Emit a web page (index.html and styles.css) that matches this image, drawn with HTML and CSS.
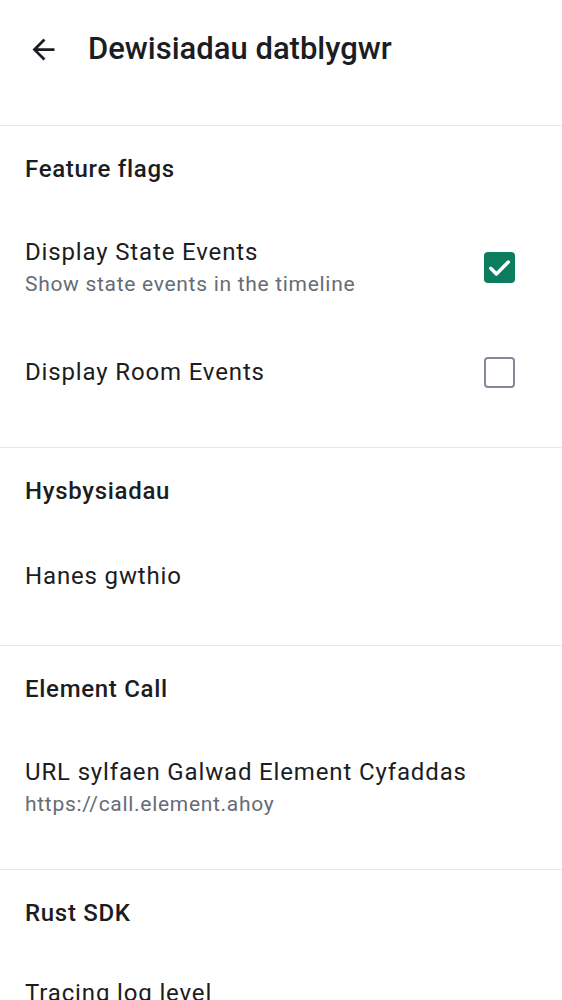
FILE: index.html
```html
<!DOCTYPE html>
<html lang="cy">
<head>
<meta charset="utf-8">
<title>Dewisiadau datblygwr</title>
<link rel="stylesheet" href="styles.css">
</head>
<body>
<header class="topbar">
  <button class="back" aria-label="Back">
    <svg viewBox="0 0 24 24" width="33" height="33"><path d="M20 11H7.83l5.59-5.59L12 4l-8 8 8 8 1.41-1.41L7.83 13H20v-2z" fill="#1b1d22"/></svg>
  </button>
  <h1 class="title">Dewisiadau datblygwr</h1>
</header>

<section class="section">
  <h2 class="section-title">Feature flags</h2>
  <div class="item item-two">
    <div class="texts">
      <div class="item-title">Display State Events</div>
      <div class="item-sub">Show state events in the timeline</div>
    </div>
    <span class="checkbox checked">
      <svg viewBox="0 0 24 24" width="31" height="31"><path d="M5.2 12.6l4.4 4.4L18.8 7.8" fill="none" stroke="#fff" stroke-width="2.7" stroke-linecap="round" stroke-linejoin="round"/></svg>
    </span>
  </div>
  <div class="item item-check">
    <div class="texts">
      <div class="item-title">Display Room Events</div>
    </div>
    <span class="checkbox"></span>
  </div>
</section>

<section class="section">
  <h2 class="section-title">Hysbysiadau</h2>
  <div class="item item-one">
    <div class="texts">
      <div class="item-title">Hanes gwthio</div>
    </div>
  </div>
</section>

<section class="section">
  <h2 class="section-title">Element Call</h2>
  <div class="item item-two">
    <div class="texts">
      <div class="item-title">URL sylfaen Galwad Element Cyfaddas</div>
      <div class="item-sub">https://call.element.ahoy</div>
    </div>
  </div>
</section>

<section class="section">
  <h2 class="section-title">Rust SDK</h2>
  <div class="item item-last">
    <div class="texts">
      <div class="item-title">Tracing log level</div>
    </div>
  </div>
</section>
</body>
</html>
```

FILE: styles.css
```css
* { box-sizing: border-box; }
html, body { margin: 0; padding: 0; background: #ffffff; }
body {
  font-family: Roboto, "Noto Sans", "Liberation Sans", sans-serif;
  color: #1b1d22;
  width: 562px;
  overflow: hidden;
}
.topbar {
  height: 98px;
  margin-bottom: 27px;
  display: flex;
  align-items: center;
}
.back {
  border: 0;
  background: none;
  padding: 0;
  margin-left: 27px;
  width: 33px;
  height: 33px;
  display: flex;
}
.title {
  margin: 0 0 0 28px;
  font-size: 31px;
  font-weight: 500;
  letter-spacing: 0;
  line-height: 40px;
}
.section {
  border-top: 1px solid #e7e8ea;
  padding-bottom: 26px;
}
.section-title {
  margin: 0;
  height: 85px;
  display: flex;
  align-items: center;
  padding: 0 25px;
  font-size: 24px;
  font-weight: 500;
  letter-spacing: 0.7px;
}
.item {
  display: flex;
  align-items: center;
  padding: 0 47px 0 25px;
}
.item-two { min-height: 112px; }
.item-check { min-height: 98px; }
.item-one { min-height: 86px; }
.item-last { min-height: 76px; }
.texts { flex: 1; }
.item-title {
  font-size: 24px;
  line-height: 30px;
  letter-spacing: 0.85px;
}
.item-sub {
  font-size: 21px;
  line-height: 28px;
  letter-spacing: 0.7px;
  color: #656c76;
  margin-top: 3px;
}
.checkbox {
  width: 31px;
  height: 31px;
  border-radius: 4px;
  border: 2.5px solid #818a96;
  flex: none;
  display: flex;
  align-items: center;
  justify-content: center;
}
.checkbox.checked {
  background: #0b7d5e;
  border: 0;
}
```
